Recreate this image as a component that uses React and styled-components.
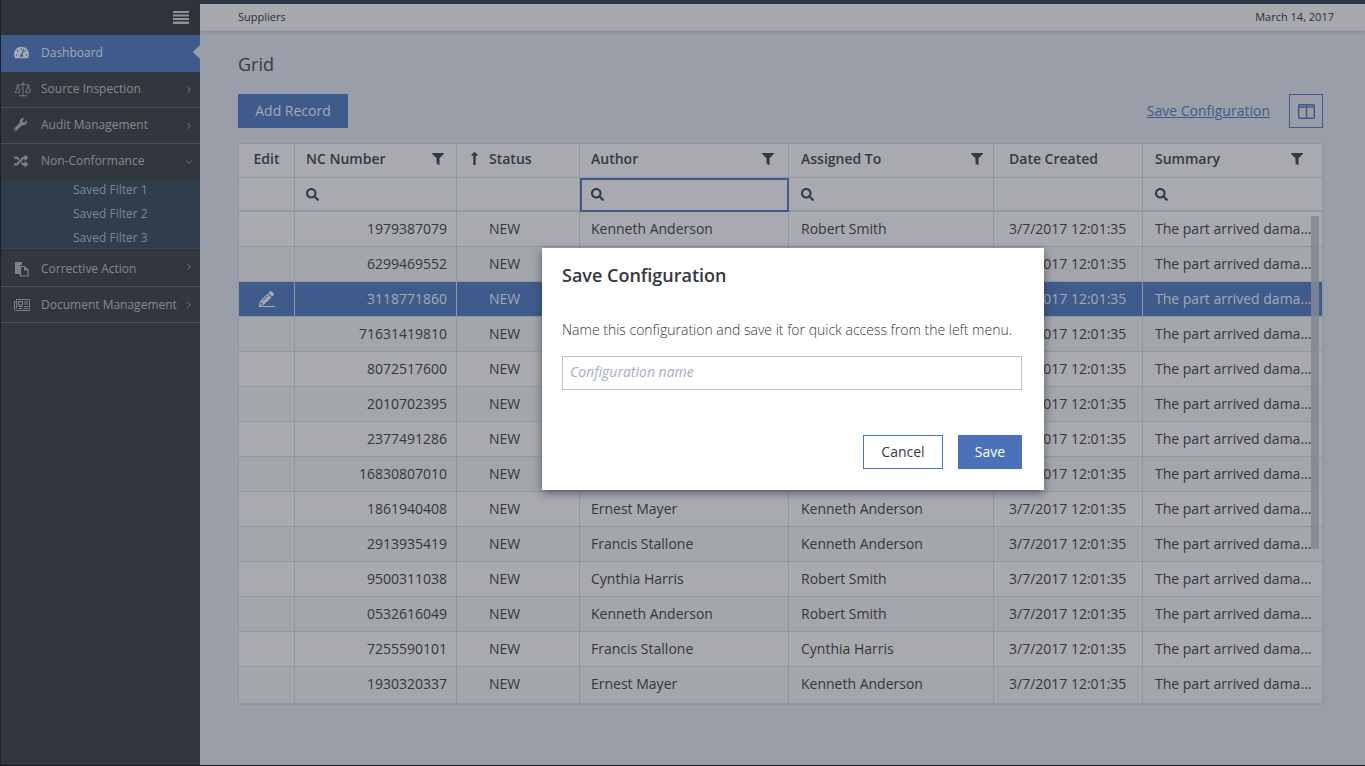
import styled, { createGlobalStyle } from "styled-components";
import {
    FaFilter,
    FaLongArrowAltUp,
    FaRandom,
    FaSearch,
    FaTachometerAlt,
    FaWrench,
    FaPencilAlt,
} from "react-icons/fa";
import { LuChevronRight, LuChevronDown, LuScale } from "react-icons/lu";

const GlobalStyle = createGlobalStyle`
    html, body {
        margin: 0;
        padding: 0;
        height: 766px;
        overflow: hidden;
        background: #999ea8;
        font-family: "Open Sans", "Liberation Sans", sans-serif;
    }
    * { box-sizing: border-box; }
`;

/*Icons ------------*/
const FilesIcon = () => (
    <svg width="15" height="16" viewBox="0 0 15 16">
        <path d="M1 1h7v3H6v9H1z" fill="currentColor" />
        <path d="M6.5 5.5h4l3.5 3.5v6H6.5z" fill="none" stroke="currentColor" strokeWidth="1.2" />
        <path d="M10.5 5.5v3.5H14" fill="currentColor" stroke="currentColor" />
    </svg>
);

const NewsIcon = () => (
    <svg width="16" height="12" viewBox="0 0 16 12" fill="none" stroke="currentColor" strokeWidth="1">
        <path d="M2.5.5h13v11H1.5a1 1 0 0 1-1-1V2.5h2z" />
        <path d="M2.5 2.5v7" />
        <rect x="4.5" y="2.5" width="4" height="3.5" />
        <path d="M10 3h4M10 5h4M10 7.5h4M10 9.5h4M4.5 7.5h4M4.5 9.5h4" />
    </svg>
);

/*Data ------------*/
const rows = [
    ["1979387079", "Kenneth Anderson", "Robert Smith"],
    ["6299469552", "Ernest Mayer", "Robert Smith"],
    ["3118771860", "Cynthia Harris", "Kenneth Anderson"],
    ["71631419810", "Francis Stallone", "Robert Smith"],
    ["8072517600", "Kenneth Anderson", "Cynthia Harris"],
    ["2010702395", "Ernest Mayer", "Robert Smith"],
    ["2377491286", "Cynthia Harris", "Kenneth Anderson"],
    ["16830807010", "Robert Smith", "Francis Stallone"],
    ["1861940408", "Ernest Mayer", "Kenneth Anderson"],
    ["2913935419", "Francis Stallone", "Kenneth Anderson"],
    ["9500311038", "Cynthia Harris", "Robert Smith"],
    ["0532616049", "Kenneth Anderson", "Robert Smith"],
    ["7255590101", "Francis Stallone", "Cynthia Harris"],
    ["1930320337", "Ernest Mayer", "Kenneth Anderson"],
];

const columns = [
    { label: "Edit", center: true, pad: 0 },
    { label: "NC Number", filter: 12, search: true, pad: 11 },
    { label: "Status", sorted: true, pad: 32 },
    { label: "Author", filter: 14, search: true, focused: true, pad: 11 },
    { label: "Assigned To", filter: 10, search: true, pad: 12 },
    { label: "Date Created", pad: 15 },
    { label: "Summary", filter: 19, search: true, pad: 12 },
];

const App = () => {
    return (
        <Page>
            <GlobalStyle />
            <Sidebar>
                <BurgerBar>
                    <svg width="16" height="14" viewBox="0 0 16 14" fill="#8f9398">
                        <rect y="0" width="16" height="2" />
                        <rect y="3.5" width="16" height="2" />
                        <rect y="7" width="16" height="2" />
                        <rect y="10.5" width="16" height="2.5" />
                    </svg>
                </BurgerBar>
                <ActiveItem>
                    <MenuIcon><FaTachometerAlt size={15} /></MenuIcon>
                    Dashboard
                </ActiveItem>
                <MenuItem>
                    <MenuIcon><LuScale size={18} strokeWidth={1.2} /></MenuIcon>
                    Source Inspection
                    <Caret><LuChevronRight size={10} /></Caret>
                </MenuItem>
                <MenuItem>
                    <MenuIcon><FaWrench size={13} /></MenuIcon>
                    Audit Management
                    <Caret><LuChevronRight size={10} /></Caret>
                </MenuItem>
                <MenuItem $flat>
                    <MenuIcon><FaRandom size={14} /></MenuIcon>
                    Non-Conformance
                    <Caret><LuChevronDown size={10} /></Caret>
                </MenuItem>
                <SubMenu>
                    <SubItem>Saved Filter 1</SubItem>
                    <SubItem>Saved Filter 2</SubItem>
                    <SubItem>Saved Filter 3</SubItem>
                </SubMenu>
                <TallItem>
                    <MenuIcon><FilesIcon /></MenuIcon>
                    Corrective Action
                    <Caret><LuChevronRight size={10} /></Caret>
                </TallItem>
                <LastItem>
                    <MenuIcon><NewsIcon /></MenuIcon>
                    Document Management
                    <Caret><LuChevronRight size={10} /></Caret>
                </LastItem>
            </Sidebar>
            <Main>
                <Header>
                    <span>Suppliers</span>
                    <span>March 14, 2017</span>
                </Header>
                <Content>
                    <Title>Grid</Title>
                    <Toolbar>
                        <AddButton>Add Record</AddButton>
                        <ToolbarRight>
                            <SaveLink>Save Configuration</SaveLink>
                            <LayoutButton>
                                <svg width="17" height="15" viewBox="0 0 17 15" fill="none" stroke="#3f5b8b" strokeWidth="1.4">
                                    <rect x="0.7" y="0.7" width="15.6" height="13.6" rx="1" />
                                    <path d="M8.5 1v13M1 3h15" />
                                </svg>
                            </LayoutButton>
                        </ToolbarRight>
                    </Toolbar>
                    <TableWrap>
                        <Grid>
                            {columns.map((c) => (
                                <HeadCell key={c.label} $center={c.center} $pad={c.sorted ? 11 : c.pad}>
                                    {c.sorted && <SortIcon><FaLongArrowAltUp size={15} /></SortIcon>}
                                    {c.label}
                                    {c.filter && <FilterIcon $right={c.filter}><FaFilter size={12} /></FilterIcon>}
                                </HeadCell>
                            ))}
                            {columns.map((c) => (
                                <FilterCell key={c.label} $focused={c.focused} $pad={c.pad}>
                                    {c.search && <FaSearch size={13} />}
                                </FilterCell>
                            ))}
                            {rows.map((r, i) => {
                                const rowProps = { $selected: i === 2, $alt: i % 2 === 1 };
                                return (
                                    <Row key={r[0]}>
                                        <EditCell {...rowProps}>
                                            {i === 2 && (
                                                <PencilWrap>
                                                    <FaPencilAlt size={15} />
                                                </PencilWrap>
                                            )}
                                        </EditCell>
                                        <NumberCell {...rowProps}>{r[0]}</NumberCell>
                                        <Cell {...rowProps} $pad={32}>NEW</Cell>
                                        <Cell {...rowProps} $pad={11}>{r[1]}</Cell>
                                        <Cell {...rowProps} $pad={12}>{r[2]}</Cell>
                                        <Cell {...rowProps} $pad={15}>3/7/2017 12:01:35</Cell>
                                        <SummaryCell {...rowProps} $pad={12}>
                                            The part arrived damaged on site
                                        </SummaryCell>
                                    </Row>
                                );
                            })}
                        </Grid>
                        <ScrollThumb />
                    </TableWrap>
                </Content>
            </Main>
            <Modal>
                <ModalTitle>Save Configuration</ModalTitle>
                <ModalText>Name this configuration and save it for quick access from the left menu.</ModalText>
                <NameInput placeholder="Configuration name" />
                <ModalActions>
                    <CancelButton>Cancel</CancelButton>
                    <SaveButton>Save</SaveButton>
                </ModalActions>
            </Modal>
        </Page>
    );
};

export default App;

const Page = styled.div`
    position: relative;
    display: flex;
    width: 1365px;
    height: 766px;
    overflow: hidden;
    border-bottom: 1px solid #14171c;
    border-left: 1px solid #1d2127;
`;

const Sidebar = styled.nav`
    width: 199px;
    flex: none;
    background: #32363d;
    color: #858a90;
    font-size: 12px;
`;

const BurgerBar = styled.div`
    height: 35px;
    display: flex;
    justify-content: flex-end;
    align-items: center;
    padding: 1px 11px 0 0;
    background: #2f343b;
`;

const MenuIcon = styled.span`
    width: 40px;
    padding-left: 13px;
    display: flex;
    align-items: center;
    color: #7c8087;
`;

const MenuItem = styled.div`
    position: relative;
    display: flex;
    align-items: center;
    height: 36px;
    padding-bottom: 2px;
    border-bottom: 1px solid ${(p) => (p.$flat ? "#30363d" : "#4d5159")};
    white-space: nowrap;
`;

const TallItem = styled(MenuItem)`
    height: 38px;
    padding: 2px 0 0;
`;

const LastItem = styled(MenuItem)`
    padding-bottom: 0;
`;

const ActiveItem = styled(MenuItem)`
    background: #3f5b8b;
    color: #a4a9b4;
    border-bottom: none;
    height: 37px;

    ${MenuIcon} {
        color: #a4a9b4;
    }

    &::after {
        content: "";
        position: absolute;
        right: 0;
        top: 10px;
        border: 7px solid transparent;
        border-left: none;
        border-right-color: #999ea8;
    }
`;

const Caret = styled.span`
    position: absolute;
    right: 6px;
    top: 13px;
    display: flex;
    color: #858a90;
`;

const SubMenu = styled.div`
    height: 69px;
    background: #2f3d4d;
    border-bottom: 1px solid #3a4654;
`;

const SubItem = styled.div`
    height: 24px;
    line-height: 20px;
    padding-left: 72px;
    color: #7f8791;
`;

const Main = styled.main`
    flex: 1;
    min-width: 0;
    display: flex;
    flex-direction: column;
    border-top: 4px solid #2e3846;
    background: #999ea8;
`;

const Header = styled.header`
    flex: none;
    height: 27px;
    display: flex;
    justify-content: space-between;
    align-items: center;
    padding: 0 31px 2px 38px;
    background: #a7a9ad;
    border-bottom: 1px solid #9b9ea3;
    box-shadow: 0 1px 3px rgba(60, 65, 75, 0.25);
    font-size: 11px;
    color: #2d3037;
`;

const Content = styled.div`
    flex: 1;
    padding: 0 42px 0 38px;
`;

const Title = styled.h1`
    margin: 20px 0 0;
    height: 26px;
    line-height: 26px;
    font-size: 18px;
    font-weight: 400;
    color: #363b44;
`;

const Toolbar = styled.div`
    margin-top: 17px;
    height: 34px;
    display: flex;
    justify-content: space-between;
    align-items: center;
`;

const ToolbarRight = styled.div`
    display: flex;
    align-items: center;
    gap: 19px;
`;

const AddButton = styled.button`
    width: 110px;
    height: 34px;
    border: none;
    padding: 0 0 2px;
    background: #3f5b8b;
    color: #a4a9b4;
    font-family: inherit;
    font-size: 14px;
`;

const SaveLink = styled.a`
    margin-top: -2px;
    color: #3f5b8b;
    font-size: 14px;
    text-decoration: underline;
`;

const LayoutButton = styled.div`
    width: 34px;
    height: 34px;
    display: flex;
    align-items: center;
    justify-content: center;
    border: 1px solid #3f5b8b;
`;

const TableWrap = styled.div`
    position: relative;
    margin-top: 15px;
    width: 1086px;
`;

const Grid = styled.div`
    display: grid;
    grid-template-columns: 56px 162px 123px 209px 205px 149px 180px;
    grid-template-rows: 34px 34px repeat(13, 35px) 37px;
    border: 1px solid #8f989c;
    font-size: 14px;
    color: #33373e;
`;

const Row = styled.div`
    display: contents;
`;

const HeadCell = styled.div`
    position: relative;
    display: flex;
    align-items: center;
    justify-content: ${(p) => (p.$center ? "center" : "flex-start")};
    padding: 0 ${(p) => p.$pad}px 5px;
    background: #a8aaaf;
    border-right: 1px solid #8f989c;
    border-bottom: 1px solid #8f989c;
    font-weight: 600;
    color: #323a47;
`;

const SortIcon = styled.span`
    display: flex;
    margin: 0 7px 0 -1px;
`;

const FilterIcon = styled.span`
    position: absolute;
    right: ${(p) => p.$right}px;
    top: 9px;
    display: flex;
`;

const FilterCell = styled.div`
    display: flex;
    align-items: center;
    padding: 0 ${(p) => p.$pad}px;
    background: #a8aaaf;
    color: #323a47;
    border-right: 1px solid #8f989c;
    border-bottom: 2px solid #8f989c;
    ${(p) => p.$focused && "outline: 2px solid #3f5b8b; outline-offset: -2px;"}
`;

const Cell = styled.div`
    display: flex;
    align-items: flex-start;
    padding: 0 ${(p) => p.$pad || 0}px;
    line-height: 33px;
    white-space: nowrap;
    overflow: hidden;
    background: ${(p) => (p.$selected ? "#3f5b8b" : p.$alt ? "#a3a6aa" : "#a8aaaf")};
    color: ${(p) => (p.$selected ? "#a4a9b4" : "#33373e")};
    border-right: 1px solid #8f989c;
    border-bottom: 1px solid #8f989c;
`;

const EditCell = styled(Cell)`
    justify-content: center;
    padding-top: 9px;
`;

const NumberCell = styled(Cell)`
    justify-content: flex-end;
    padding-right: 9px;
`;

const SummaryCell = styled(Cell)`
    display: block;
    padding-right: 10px;
    text-overflow: ellipsis;
`;

const PencilWrap = styled.span`
    display: flex;
    width: 16px;
    height: 16px;
    border-bottom: 1px solid currentColor;
`;

const ScrollThumb = styled.div`
    position: absolute;
    right: 5px;
    top: 73px;
    width: 8px;
    height: 333px;
    background: rgba(130, 136, 148, 0.85);
`;

const Modal = styled.div`
    position: absolute;
    left: 541px;
    top: 248px;
    width: 502px;
    height: 242px;
    padding: 14px 22px 21px 20px;
    display: flex;
    flex-direction: column;
    background: #ffffff;
    box-shadow: 0 3px 9px rgba(30, 35, 45, 0.55);
    color: #33373e;
`;

const ModalTitle = styled.h2`
    margin: 0;
    height: 26px;
    line-height: 26px;
    font-size: 18px;
    font-weight: 600;
`;

const ModalText = styled.p`
    margin: 32px 0 0;
    height: 20px;
    line-height: 20px;
    font-size: 14px;
    font-weight: 300;
    white-space: nowrap;
`;

const NameInput = styled.input`
    margin-top: 16px;
    width: 460px;
    height: 34px;
    padding: 0 7px 3px;
    border: 1px solid #b9c0d0;
    outline: none;
    font-family: inherit;
    font-size: 14px;

    &::placeholder {
        color: #a4acbd;
        font-style: italic;
        opacity: 1;
    }
`;

const ModalActions = styled.div`
    margin-top: auto;
    display: flex;
    justify-content: flex-end;
    gap: 15px;
`;

const CancelButton = styled.button`
    width: 80px;
    height: 34px;
    padding: 0 0 1px;
    background: #ffffff;
    border: 1px solid #4a72b8;
    color: #33373e;
    font-family: inherit;
    font-size: 14px;
`;

const SaveButton = styled.button`
    width: 64px;
    height: 34px;
    padding: 0 0 1px;
    border: none;
    background: #4a72b8;
    color: #ffffff;
    font-family: inherit;
    font-size: 14px;
`;
